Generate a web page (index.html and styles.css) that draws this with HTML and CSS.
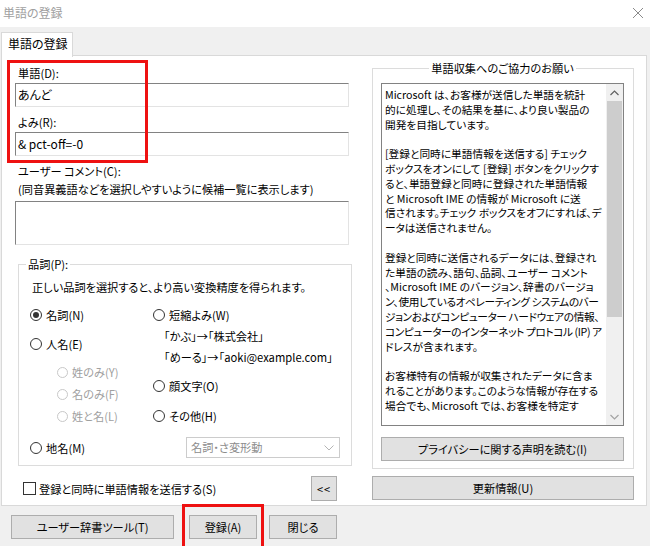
FILE: index.html
```html
<!DOCTYPE html>
<html lang="ja">
<head>
    <meta charset="UTF-8">
    <meta name="viewport" content="width=device-width, initial-scale=1.0">
    <title>単語の登録</title>
    <link rel="stylesheet" href="styles.css">
</head>
<body>
    <div class="window">
        <div class="titlebar">
            <span class="title">単語の登録</span>
            <svg class="close" width="12" height="12" viewBox="0 0 12 12"><path d="M1 1L11 11M11 1L1 11" stroke="#8a8a8a" stroke-width="1" fill="none"/></svg>
        </div>
        <div class="client">
            <div class="tabs"><div class="tab">単語の登録</div></div>
            <div class="panel">
                <div class="leftcol">
                    <div class="lbl first">単語(D):</div>
                    <div class="edit">あんど</div>
                    <div class="lbl">よみ(R):</div>
                    <div class="edit">&amp; pct-off=-0</div>
                    <div class="lbl">ユーザー コメント(C):</div>
                    <div class="hint">(同音異義語などを選択しやすいように候補一覧に表示します)</div>
                    <div class="memo"></div>
                    <fieldset class="pos">
                        <legend>品詞(P):</legend>
                        <div class="poshint">正しい品詞を選択すると、より高い変換精度を得られます。</div>
                        <div class="poscols">
                            <div class="col colA">
                                <div class="opt r1"><span class="radio on"></span>名詞(N)</div>
                                <div class="opt r2"><span class="radio"></span>人名(E)</div>
                                <div class="opt sub r3"><span class="radio"></span>姓のみ(Y)</div>
                                <div class="opt sub r4"><span class="radio"></span>名のみ(F)</div>
                                <div class="opt sub r4"><span class="radio"></span>姓と名(L)</div>
                            </div>
                            <div class="col colB">
                                <div class="opt r1"><span class="radio"></span>短縮よみ(W)</div>
                                <div class="example e1">「かぶ」→「株式会社」</div>
                                <div class="example e2">「めーる」→「aoki@example.com」</div>
                                <div class="opt r5"><span class="radio"></span>顔文字(O)</div>
                                <div class="opt r6"><span class="radio"></span>その他(H)</div>
                            </div>
                        </div>
                        <div class="placerow">
                            <div class="opt"><span class="radio"></span>地名(M)</div>
                            <div class="combo">
                                <span>名詞・さ変形動</span>
                                <svg width="10" height="6" viewBox="0 0 10 6"><path d="M0.5 0.5L5 5L9.5 0.5" stroke="#b4b4b4" fill="none"/></svg>
                            </div>
                        </div>
                    </fieldset>
                    <div class="sendrow">
                        <div class="check"><span class="box"></span>登録と同時に単語情報を送信する(S)</div>
                        <div class="btn small">&lt;&lt;</div>
                    </div>
                </div>
                <div class="rightcol">
                    <fieldset class="collect">
                        <legend>単語収集へのご協力のお願い</legend>
                        <div class="notice">
                            <div class="noticetext">
                                Microsoft は、お客様が送信した単語を統計<br>
                                的に処理し、その結果を基に、より良い製品の<br>
                                開発を目指しています。<br>
                                <br>
                                [登録と同時に単語情報を送信する] チェック<br>
                                ボックスをオンにして [登録] ボタンをクリックす<br>
                                ると、単語登録と同時に登録された単語情報<br>
                                と Microsoft IME の情報が Microsoft に送<br>
                                信されます。チェック ボックスをオフにすれば、デ<br>
                                ータは送信されません。<br>
                                <br>
                                登録と同時に送信されるデータには、登録され<br>
                                た単語の読み、語句、品詞、ユーザー コメント<br>
                                、Microsoft IME のバージョン、辞書のバージョ<br>
                                <span class="tight">ン、使用しているオペレーティング システムのバー</span><br>
                                <span class="tight">ジョンおよびコンピューター ハードウェアの情報、</span><br>
                                <span class="tight">コンピューターのインターネット プロトコル (IP) ア</span><br>
                                ドレスが含まれます。<br>
                                <br>
                                お客様特有の情報が収集されたデータに含ま<br>
                                れることがあります。このような情報が存在する<br>
                                場合でも、Microsoft では、お客様を特定す
                            </div>
                            <div class="scrollbar">
                                <div class="arrow"><svg width="9" height="6" viewBox="0 0 9 6"><path d="M0.5 5L4.5 1L8.5 5" stroke="#606060" stroke-width="1.2" fill="none"/></svg></div>
                                <div class="track"><div class="thumb"></div></div>
                                <div class="arrow"><svg width="9" height="6" viewBox="0 0 9 6"><path d="M0.5 1L4.5 5L8.5 1" stroke="#a3a3a3" stroke-width="1.2" fill="none"/></svg></div>
                            </div>
                        </div>
                        <div class="btn wide">プライバシーに関する声明を読む(I)</div>
                    </fieldset>
                    <div class="btn update">更新情報(U)</div>
                </div>
            </div>
            <div class="footer">
                <div class="btn tool">ユーザー辞書ツール(T)</div>
                <div class="btn ok">登録(A)</div>
                <div class="btn cancel">閉じる</div>
            </div>
        </div>
        <div class="mark mark-word"></div>
        <div class="mark mark-ok"></div>
    </div>
</body>
</html>
```

FILE: styles.css
```css
* { box-sizing: border-box; }
body { margin: 0; font-family: "Noto Sans CJK JP", sans-serif; font-size: 11.2px; color: #000; background: #f0f0f0; }
.window { position: relative; width: 650px; height: 546px; overflow: hidden; background: #f0f0f0; font-feature-settings: "palt"; }

.titlebar { display: flex; justify-content: space-between; align-items: center; height: 27px; background: #fff; padding: 0 6px 2px 3px; }
.title { color: #a0a0a0; line-height: 16px; font-size: 12px; }
.close { margin-right: 0; }

.client { display: flex; flex-direction: column; }
.tabs { display: flex; padding: 5px 0 0 1px; height: 29px; }
.tab { width: 72px; height: 25px; background: #fff; border: 1px solid #d9d9d9; border-bottom: none; padding-left: 6px; line-height: 22px; font-size: 12px; position: relative; z-index: 1; }

.panel { display: flex; margin: -1px 0 0 1px; width: 646px; height: 451px; background: #fff; border: 1px solid #d9d9d9; padding: 0 0 0 13px; }
.leftcol { width: 337px; display: flex; flex-direction: column; }
.rightcol { width: 262px; margin-left: 20px; display: flex; flex-direction: column; }

.lbl { line-height: 16px; margin-top: 7px; padding-left: 3px; }
.lbl.first { margin-top: 9px; }
.edit { margin-top: 2px; width: 334px; height: 24px; border: 1px solid; border-color: #828282 #e3e3e3 #e3e3e3 #828282; padding-left: 2px; line-height: 21px; font-size: 12px; }
.hint { margin-top: 2px; line-height: 16px; padding-left: 3px; }
.memo { margin-top: 4px; width: 334px; height: 44px; border: 1px solid; border-color: #828282 #e3e3e3 #e3e3e3 #828282; }

fieldset { margin: 0; border: 1px solid #dcdcdc; min-width: 0; }
legend { line-height: 16px; padding: 0 2px; }
.pos { margin: 11px 0 0 3px; width: 334px; padding: 0 0 7px 11px; }
.pos legend { margin-left: -4px; }
.poshint { margin-top: 7px; line-height: 16px; padding-left: 2px; }
.poscols { display: flex; margin-top: 10px; }
.col { display: flex; flex-direction: column; }
.colA { width: 123px; }
.opt { display: flex; align-items: center; height: 20px; line-height: 20px; }
.radio { width: 12px; height: 12px; border: 1px solid #333; border-radius: 50%; margin-right: 4px; display: flex; align-items: center; justify-content: center; }
.radio.on::after { content: ""; width: 6px; height: 6px; border-radius: 50%; background: #333; }
.sub { padding-left: 27px; color: #a0a0a0; }
.sub .radio { border-color: #c8c8c8; width: 11px; height: 11px; }
.r2 { margin-top: 9px; }
.r3 { margin-top: 8px; }
.r4 { margin-top: 2px; }
.example { line-height: 20px; padding-left: 11px; }
.e1 { margin-top: 1px; }
.e2 { margin-top: 1px; }
.r5 { margin-top: 9px; }
.r6 { margin-top: 10px; }
.placerow { display: flex; justify-content: space-between; align-items: center; margin-top: 11px; padding-right: 11px; }
.combo { display: flex; justify-content: space-between; align-items: center; width: 154px; height: 21px; border: 1px solid #cccccc; background: #fff; color: #8c8c8c; padding: 0 5px 0 4px; line-height: 19px; }

.sendrow { display: flex; justify-content: space-between; align-items: center; margin-top: 10px; height: 25px; padding: 0 15px 0 8px; }
.check { display: flex; align-items: center; }
.box { width: 13px; height: 13px; border: 1px solid #333; background: #fff; margin-right: 3px; }

.btn { display: flex; justify-content: center; align-items: center; background: #e1e1e1; border: 1px solid #adadad; height: 24px; line-height: 16px; }
.btn.small { width: 26px; height: 25px; font-size: 11px; letter-spacing: 1px; }

.collect { margin-top: 4px; padding: 0 9px 7px 8px; height: 409px; }
.collect legend { margin: 0 auto; }
.notice { display: flex; margin-top: 7px; height: 343px; border: 1px solid #828282; background: #fff; }
.noticetext { flex: 1; overflow: hidden; white-space: nowrap; padding: 4px 0 0 3px; line-height: 14.8px; font-size: 10.7px; }
.tight { letter-spacing: -0.4px; }
.scrollbar { width: 17px; display: flex; flex-direction: column; background: #f0f0f0; }
.arrow { height: 17px; display: flex; justify-content: center; align-items: center; }
.track { flex: 1; padding: 0 1px; }
.thumb { height: 216px; background: #cdcdcd; }
.btn.wide { margin-top: 11px; }
.btn.update { margin-top: 7px; }

.footer { display: flex; padding: 9px 0 0 11px; }
.btn.tool { width: 163px; }
.btn.ok { width: 68px; margin-left: 15px; }
.btn.cancel { width: 68px; margin-left: 12px; }

.mark { position: absolute; border: 3px solid #ee1111; }
.mark-word { left: 7px; top: 60px; width: 141px; height: 103px; }
.mark-ok { left: 182px; top: 504px; width: 82px; height: 46px; }
```
